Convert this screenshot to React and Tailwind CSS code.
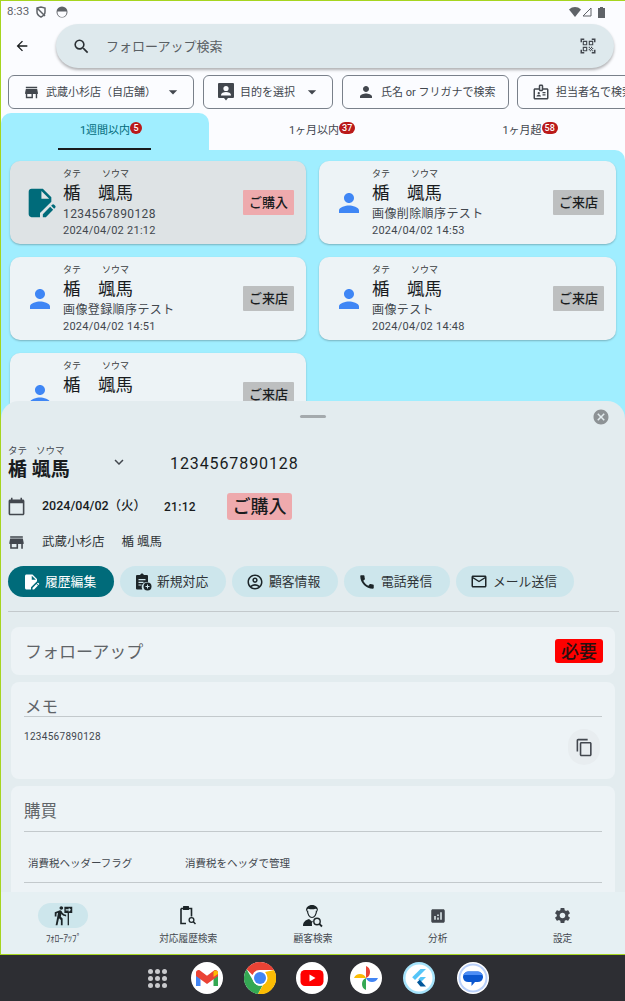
import React from "react";
import {
  MdArrowBack, MdSearch, MdQrCodeScanner, MdStore, MdPerson, MdArrowDropDown,
  MdOutlineBadge, MdExpandMore, MdCalendarToday, MdOutlineAccountCircle, MdCall, MdMailOutline,
  MdContentCopy, MdFollowTheSigns, MdAnalytics, MdSettings, MdCancel, MdEditDocument,
} from "react-icons/md";

function Chip({ icon, label, caret, w }) {
  return (
    <div className={`flex h-[34px] shrink-0 items-center rounded-md border border-[#79808a] pl-[14px] ${w}`}>
      {icon}
      <span className="relative top-[1px] ml-[6px] whitespace-nowrap text-[11px] text-[#42474e]">{label}</span>
      {caret && <MdArrowDropDown className="ml-[7px] text-[20px] text-[#42474e]" />}
    </div>
  );
}

function Tab({ label, count, active }) {
  return (
    <div className={`relative flex h-[37px] flex-1 items-center justify-center ${active ? "rounded-t-[10px] bg-[#a0eeff]" : ""}`}>
      <span className={`relative top-[0px] text-[11px] ${active ? "text-[#006b7a]" : "text-[#42474e]"}`}>
        {label}
        <span className="absolute left-full top-[-1px] flex h-[12px] min-w-[12px] items-center justify-center rounded-full bg-[#ba1a1a] px-[3px] text-[9px] font-medium text-white">
          {count}
        </span>
      </span>
      {active && <div className="absolute bottom-0 left-[57px] h-[2px] w-[93px] bg-[#191c1e]" />}
    </div>
  );
}

function Card({ sub, date, badge, selected }) {
  return (
    <div className={`flex h-[83px] items-center rounded-[10px] pr-[12px] shadow-[0_1px_2px_rgba(0,0,0,0.25)] ${selected ? "bg-[#dee3e5]" : "bg-[#edf3f6]"}`}>
      <div className="flex w-[53px] shrink-0 justify-center pl-[7px]">
        {selected ? <MdEditDocument className="text-[34px] text-[#006b7a]" /> : <MdPerson className="text-[30px] text-[#3f86f5]" />}
      </div>
      <div className="flex-1 pt-[1px]">
        <div className="flex h-[10px] text-[9px] leading-[10px] text-[#3a3d40]">
          <span className="w-[39px]">タテ</span>
          <span>ソウマ</span>
        </div>
        <div className="mt-[3px] flex h-[22px] text-[17.5px] leading-[22px] text-[#191c1e]">
          <span className="w-[35px]">楯</span>
          <span>颯馬</span>
        </div>
        <div className="mt-[2px] h-[16px] text-[12px] leading-[16px] tracking-[0.4px] text-[#42474e]">{sub}</div>
        <div className="mt-[1px] h-[15px] text-[11px] leading-[15px] tracking-[0.25px] text-[#42474e]">{date}</div>
      </div>
      <div className={`flex h-[25px] w-[51px] items-center justify-center rounded-[1px] text-[13px] font-medium text-[#191c1e] ${badge === "ご購入" ? "bg-[#eeaaad]" : "bg-[#bdbfc0]"}`}>
        {badge}
      </div>
    </div>
  );
}

function Pill({ icon, label, active, w }) {
  return (
    <div className={`flex h-[31px] shrink-0 items-center rounded-full pl-[14px] ${w} ${active ? "bg-[#006b7a] text-white" : "bg-[#cde6ec] text-[#2f3437]"}`}>
      <span className="flex w-[18px] justify-center">{icon}</span>
      <span className="ml-[5px] whitespace-nowrap text-[12.800px]">{label}</span>
    </div>
  );
}

function ClipboardPlus() {
  return (
    <svg width="18" height="18" viewBox="0 0 18 18" className="text-[#1c2528]">
      <path fill="currentColor" d="M3 2h3.200C6.500 1 7.200.5 8 .5S9.500 1 9.800 2H13a1 1 0 0 1 1 1v6.200a5 5 0 0 0-5.600 7.300H3a1 1 0 0 1-1-1V3a1 1 0 0 1 1-1z" />
      <path fill="#cde6ec" d="M4.500 6h7v1.200h-7zM4.500 8.700h5v1.200h-5zM4.500 11.400h3v1.200h-3z" />
      <circle cx="13.500" cy="13.500" r="4" fill="currentColor" />
      <path fill="#cde6ec" d="M13 11.500h1v1.500h1.500v1H14v1.500h-1V14h-1.500v-1H13z" />
    </svg>
  );
}

function ClipSearch() {
  return (
    <svg width="20" height="21" viewBox="0 0 20 21" className="text-[#1c2528]">
      <path fill="none" stroke="currentColor" strokeWidth="1.600" d="M3 3.500h2.500M11 3.500h2.500v8M8 18.500H3V3.500" />
      <rect x="5" y="1" width="6" height="4" rx="0.500" fill="currentColor" />
      <circle cx="13.500" cy="15" r="2.400" fill="none" stroke="currentColor" strokeWidth="1.300" />
      <path stroke="currentColor" strokeWidth="1.500" d="M15.300 16.800l2.200 2.200" />
    </svg>
  );
}

function PersonBoard() {
  return (
    <svg width="16" height="18" viewBox="0 0 16 18" className="text-[#42474e]">
      <path fill="currentColor" d="M1 0h14a1 1 0 0 1 1 1v13a1 1 0 0 1-1 1H10l-2 2.500L6 15H1a1 1 0 0 1-1-1V1a1 1 0 0 1 1-1z" />
      <circle cx="8" cy="5.500" r="2.600" fill="#fbfcff" />
      <path fill="#fbfcff" d="M3 12c0-2 2.500-3 5-3s5 1 5 3v.500H3z" />
    </svg>
  );
}

function PersonGlass() {
  return (
    <svg width="22" height="24" viewBox="0 0 22 24" className="text-[#1c2528]">
      <path fill="currentColor" d="M4 8C3.500 3 6.500 1 10 1s6.500 2 6 7c-.5-2-1.500-3-2.500-3.200C11.500 5.500 8 5.500 6.500 4.800 5.200 5.200 4.500 6.500 4 8z" />
      <path fill="none" stroke="currentColor" strokeWidth="1.200" d="M5.500 6.500c0 4 2 7 4.500 7s4.500-3 4.500-7" />
      <path fill="currentColor" d="M1 22c0-4 2.500-6 6-7l3 2.500 1.500-1.200A6 6 0 0 0 10 22z" />
      <circle cx="15" cy="17.500" r="3.200" fill="#e6f0f3" stroke="currentColor" strokeWidth="1.400" />
      <path stroke="currentColor" strokeWidth="1.800" d="M17.300 19.800l2.700 2.700" />
    </svg>
  );
}

function NavItem({ icon, label, pill, narrow }) {
  return (
    <div className="flex flex-1 flex-col items-center pt-[11px]">
      <div className={`flex h-[25px] w-[50px] items-center justify-center rounded-full ${pill ? "bg-[#cde6ec]" : ""}`}>{icon}</div>
      <span className={`mt-[4px] text-[9.700px] leading-[14px] text-[#42474e] ${narrow ? "tracking-[-0.5px]" : ""}`}>{label}</span>
    </div>
  );
}

function Gmail() {
  return (
    <svg viewBox="0 0 32 32" width="32" height="32">
      <circle cx="16" cy="16" r="16" fill="#fff" />
      <path fill="#4285f4" d="M5 12v12h4.500V14.500z" />
      <path fill="#34a853" d="M22.500 14.500V24H27V12z" />
      <path fill="#ea4335" d="M5 10.500v3.500l11 8 11-8v-3.500c0-2-2.300-3.200-4-2l-7 5.200-7-5.200c-1.700-1.200-4 0-4 2z" />
      <path fill="#fbbc04" d="M22.500 9.500v5.500L27 12v-1.500c0-2-2.800-3-4.500-1z" />
    </svg>
  );
}

function Chrome() {
  return (
    <svg viewBox="0 0 32 32" width="32" height="32">
      <circle cx="16" cy="16" r="16" fill="#fff" />
      <path fill="#ea4335" d="M16 0a16 16 0 0 1 13.900 8H16a8 8 0 0 0-7.500 5L2.600 7.300A16 16 0 0 1 16 0z" />
      <path fill="#34a853" d="M2.600 7.300 9 18.500a8 8 0 0 0 9.500 5.100L14 32A16 16 0 0 1 2.600 7.300z" />
      <path fill="#fbbc04" d="M29.900 8A16 16 0 0 1 14 32l7-12.500A8 8 0 0 0 21 10z" />
      <circle cx="16" cy="16" r="7.500" fill="#fff" />
      <circle cx="16" cy="16" r="6" fill="#4285f4" />
    </svg>
  );
}

function Youtube() {
  return (
    <svg viewBox="0 0 32 32" width="32" height="32">
      <circle cx="16" cy="16" r="16" fill="#fff" />
      <rect x="4.500" y="8" width="23" height="16" rx="4.500" fill="#ff0000" />
      <path fill="#fff" d="M13.500 12.500v7l6-3.500z" />
    </svg>
  );
}

function Photos() {
  return (
    <svg viewBox="0 0 32 32" width="32" height="32">
      <circle cx="16" cy="16" r="16" fill="#fff" />
      <path fill="#ea4335" d="M16 16V4a6.500 6.500 0 0 1 0 12z" />
      <path fill="#4285f4" d="M16 16h12a6.500 6.500 0 0 1-12 0z" />
      <path fill="#34a853" d="M16 16v12a6.500 6.500 0 0 1 0-12z" />
      <path fill="#fbbc04" d="M16 16H4a6.500 6.500 0 0 1 12 0z" />
    </svg>
  );
}

function Flutter() {
  return (
    <svg viewBox="0 0 32 32" width="32" height="32">
      <circle cx="16" cy="16" r="16" fill="#a5e3fb" />
      <circle cx="16" cy="16" r="13.500" fill="#fff" />
      <path fill="#54c5f8" d="M17.500 7h5.500L12 18l-2.800-2.800z" />
      <path fill="#54c5f8" d="M17.500 15h5.500l-5 5-2.800-2.400z" />
      <path fill="#01579b" d="M14 20.300 16.800 17.700 23 24.500h-5.500z" />
    </svg>
  );
}

function Messages() {
  return (
    <svg viewBox="0 0 32 32" width="32" height="32">
      <circle cx="16" cy="16" r="16" fill="#fff" />
      <circle cx="16" cy="16" r="14.500" fill="#b9d0fa" />
      <circle cx="16" cy="16" r="12.500" fill="#fff" />
      <path fill="#0b57d0" d="M11.500 9.500h9a5.500 5.500 0 0 1 5.500 5v1a5.500 5.500 0 0 1-5.500 4.500H18l-3.500 4v-4h-3A5.500 5.500 0 0 1 6 15.500v-1a5.500 5.500 0 0 1 5.500-5z" />
      <path fill="#4c8df6" d="M11.500 9.500h9a5.500 5.500 0 0 1 5 3.500H6.500a5.500 5.500 0 0 1 5-3.500z" />
    </svg>
  );
}

export default function App() {
  const subs = [
    ["1234567890128", "2024/04/02 21:12", "ご購入", true],
    ["画像削除順序テスト", "2024/04/02 14:53", "ご来店"],
    ["画像登録順序テスト", "2024/04/02 14:51", "ご来店"],
    ["画像テスト", "2024/04/02 14:48", "ご来店"],
    ["", "", "ご来店"],
  ];
  return (
    <div className="relative flex h-[1001px] w-[625px] flex-col overflow-hidden bg-[#2d2e33] font-['Roboto','Noto_Sans_CJK_JP',sans-serif]">
      <div className="relative flex h-[955px] flex-col overflow-hidden border-b border-l border-t border-[#a6d51f] bg-[#fbfcff]">
        {/* status bar */}
        <div className="flex h-[23px] shrink-0 items-center pl-[6px] pr-[20px] pb-[1px] text-[#5f6368]">
          <span className="text-[11.500px]">8:33</span>
          <svg width="12" height="12" viewBox="0 0 12 12" className="ml-[6px]"><path fill="none" stroke="#5f6368" strokeWidth="1.500" d="M2 2l4-1 4 1v4c0 2.500-2 4-4 5-2-1-4-2.500-4-5zM2 2l8 8" /></svg>
          <svg width="12" height="12" viewBox="0 0 12 12" className="ml-[9px]"><circle cx="6" cy="6" r="5.500" fill="#5f6368" /><path fill="#fbfcff" d="M1.500 5.500h9v1a4.500 4.500 0 0 1-9 0z" /></svg>
          <div className="ml-auto flex items-center">
            <svg width="12" height="10" viewBox="0 0 12 10"><path fill="#5f6368" d="M0 2.500C3.500-.8 8.500-.8 12 2.500L6 10z" /></svg>
            <svg width="10" height="10" viewBox="0 0 10 10" className="ml-[1px]"><path fill="none" stroke="#5f6368" d="M9 1v8H1z" /></svg>
            <svg width="7" height="11" viewBox="0 0 7 11" className="ml-[6px]"><path fill="#5f6368" d="M2 0h3v1h2v10H0V1h2z" /></svg>
          </div>
        </div>
        {/* search */}
        <div className="flex h-[44px] shrink-0 items-center">
          <MdArrowBack className="ml-[13px] text-[16px] text-[#191c1e]" />
          <div className="ml-[26px] flex h-[44px] w-[558px] items-center rounded-full bg-[#dee9ed] pl-[16px] pr-[17px] shadow-[0_2px_3px_rgba(0,0,0,0.3)]">
            <MdSearch className="text-[19px] text-[#2a2f33]" />
            <span className="relative top-[1px] ml-[15px] text-[13px] text-[#5a6064]">フォローアップ検索</span>
            <MdQrCodeScanner className="ml-auto text-[18px] text-[#42474e]" />
          </div>
        </div>
        {/* chips */}
        <div className="ml-[7px] mt-[7px] flex h-[34px] shrink-0 gap-[9px] overflow-hidden">
          <Chip w="w-[186px]" icon={<MdStore className="text-[17px] text-[#42474e]" />} label="武蔵小杉店（自店舗）" caret />
          <Chip w="w-[130px]" icon={<PersonBoard />} label="目的を選択" caret />
          <Chip w="w-[167px]" icon={<MdPerson className="text-[18px] text-[#42474e]" />} label="氏名 or フリガナで検索" />
          <div className="-ml-[1px]">
            <Chip w="w-[130px]" icon={<MdOutlineBadge className="text-[18px] text-[#42474e]" />} label="担当者名で検索" />
          </div>
        </div>
        {/* tabs */}
        <div className="mt-[4px] flex h-[37px] shrink-0">
          <div className="w-[208px]"><Tab label="1週間以内" count="5" active /></div>
          <div className="flex flex-1 translate-x-[1px]">
            <Tab label="1ヶ月以内" count="37" />
            <Tab label="1ヶ月超" count="58" />
          </div>
        </div>
        {/* content */}
        <div className="flex-1 rounded-tr-[10px] bg-[#a0eeff] px-[9px] pt-[11px]">
          <div className="grid grid-cols-[296px_297px] gap-x-[13px] gap-y-[13px]">
            {subs.map((s, i) => (
              <Card key={i} sub={s[0]} date={s[1]} badge={s[2]} selected={s[3]} />
            ))}
          </div>
        </div>

        {/* bottom sheet */}
        <div className="absolute inset-x-0 bottom-0 top-[400px] flex flex-col overflow-hidden rounded-t-[18px] bg-[#e3ecef]">
          <div className="absolute left-[299px] top-[14px] h-[3px] w-[26px] rounded-full bg-[#a4aaad]" />
          <MdCancel className="absolute left-[591px] top-[7px] text-[18px] text-[#8d9295]" />
          <div className="flex-1 overflow-hidden pl-[7px] pr-[6px] pt-[44px]">
            <div className="flex h-[44px] items-start">
              <div className="w-[102px]">
                <div className="flex h-[11px] text-[9.500px] leading-[11px] text-[#42474e]">
                  <span className="w-[28px]">タテ</span>
                  <span>ソウマ</span>
                </div>
                <div className="mt-[2px] text-[19px] font-bold leading-[24px] text-[#191c1e]">楯 颯馬</div>
              </div>
              <MdExpandMore className="mt-[8px] text-[18px] text-[#42474e]" />
              <span className="ml-[42px] mt-[7px] text-[16px] leading-[24px] tracking-[0.9px] text-[#191c1e]">1234567890128</span>
            </div>
            <div className="mt-[4px] flex h-[27px] items-center">
              <MdCalendarToday className="ml-[-1px] text-[19px] text-[#42474e]" />
              <span className="ml-[16px] w-[122px] text-[12.500px] font-medium text-[#191c1e]">2024/04/02（火）</span>
              <span className="text-[12px] font-medium tracking-[0.3px] text-[#191c1e]">21:12</span>
              <div className="ml-[31px] flex h-[27px] w-[65px] items-center justify-center rounded-[3px] bg-[#eeaaad] text-[18px] font-medium text-[#191c1e]">ご購入</div>
            </div>
            <div className="mt-[12px] flex h-[20px] items-center text-[12.500px] text-[#2f3437]">
              <MdStore className="ml-[-1px] text-[19px] text-[#42474e]" />
              <span className="ml-[16px]">武蔵小杉店</span>
              <span className="ml-[17px]">楯 颯馬</span>
            </div>
            <div className="mt-[14px] flex gap-[6px]">
              <Pill active w="w-[106px]" label="履歴編集" icon={<MdEditDocument className="text-[20px] text-white" />} />
              <Pill w="w-[106px]" label="新規対応" icon={<ClipboardPlus />} />
              <Pill w="w-[106px]" label="顧客情報" icon={<MdOutlineAccountCircle className="text-[18px] text-[#1c2528]" />} />
              <Pill w="w-[106px]" label="電話発信" icon={<MdCall className="text-[18px] text-[#1c2528]" />} />
              <Pill w="w-[118px]" label="メール送信" icon={<MdMailOutline className="text-[19px] text-[#1c2528]" />} />
            </div>
            <div className="mt-[14px] h-px w-[611px] bg-[#c3c9cc]" />
            <div className="ml-[3px] mt-[15px] flex h-[48px] w-[604px] items-center rounded-[8px] bg-[#edf3f6] pl-[14px] pr-[12px]">
              <span className="relative top-[2px] text-[17px] text-[#5f6468]">フォローアップ</span>
              <div className="ml-auto flex h-[24px] w-[48px] items-center justify-center rounded-[3px] bg-[#ff0000] text-[18px] font-medium text-[#2a1010]">必要</div>
            </div>
            <div className="relative ml-[3px] mt-[7px] h-[97px] w-[604px] rounded-[8px] bg-[#edf3f6] px-[13px] pt-[12px]">
              <div className="h-[23px] border-b border-[#c3c9cc] pl-[1px] pt-[3px] text-[16.500px] leading-[22px] text-[#5f6468]">メモ</div>
              <div className="mt-[13px] text-[10px] leading-[14px] tracking-[0.3px] text-[#42474e]">1234567890128</div>
              <div className="absolute left-[557px] top-[47px] flex h-[36px] w-[32px] items-center justify-center rounded-full bg-[#e8edf0]">
                <MdContentCopy className="text-[19px] text-[#42474e]" />
              </div>
            </div>
            <div className="ml-[3px] mt-[7px] h-[120px] w-[604px] rounded-[8px] bg-[#edf3f6] px-[13px] pt-[15px]">
              <div className="h-[31px] border-b border-[#c3c9cc] text-[16.500px] leading-[22px] text-[#5f6468]">購買</div>
              <div className="flex h-[51px] items-center border-b border-[#c3c9cc] pl-[4px] pt-[13px] text-[10.500px] text-[#42474e]">
                <span className="w-[157px]">消費税ヘッダーフラグ</span>
                <span>消費税をヘッダで管理</span>
              </div>
            </div>
          </div>
          {/* nav */}
          <div className="flex h-[62px] shrink-0 bg-[#e6f0f3]">
            <NavItem pill narrow label="ﾌｫﾛｰｱｯﾌﾟ" icon={<MdFollowTheSigns className="text-[21px] text-[#1c2528]" />} />
            <NavItem label="対応履歴検索" icon={<ClipSearch />} />
            <NavItem label="顧客検索" icon={<PersonGlass />} />
            <NavItem label="分析" icon={<MdAnalytics className="text-[18px] text-[#42474e]" />} />
            <NavItem label="設定" icon={<MdSettings className="text-[19px] text-[#42474e]" />} />
          </div>
        </div>
      </div>
      {/* launcher */}
      <div className="flex flex-1 items-center pl-[148px]">
        <div className="grid w-[19px] grid-cols-3 gap-[2px]">
          {Array.from({ length: 9 }).map((_, i) => (
            <div key={i} className="h-[5px] w-[5px] rounded-full bg-[#c9cacd]" />
          ))}
        </div>
        <div className="ml-[24px] flex">
          <Gmail />
          <div className="ml-[21px]"><Chrome /></div>
          <div className="ml-[20px]"><Youtube /></div>
          <div className="ml-[22px]"><Photos /></div>
          <div className="ml-[21px]"><Flutter /></div>
          <div className="ml-[22px]"><Messages /></div>
        </div>
      </div>
    </div>
  );
}
